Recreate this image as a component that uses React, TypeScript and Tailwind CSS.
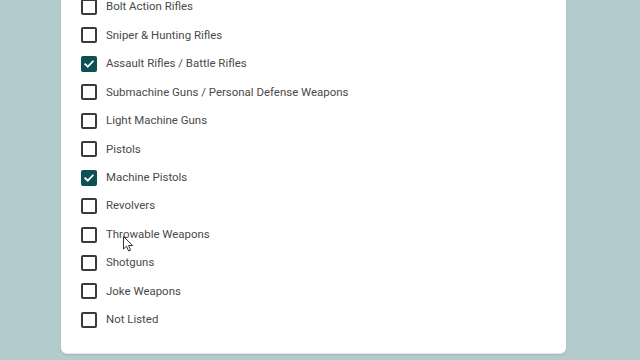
import React from "react";

const items: { label: string; checked: boolean }[] = [
  { label: "Bolt Action Rifles", checked: false },
  { label: "Sniper & Hunting Rifles", checked: false },
  { label: "Assault Rifles / Battle Rifles", checked: true },
  { label: "Submachine Guns / Personal Defense Weapons", checked: false },
  { label: "Light Machine Guns", checked: false },
  { label: "Pistols", checked: false },
  { label: "Machine Pistols", checked: true },
  { label: "Revolvers", checked: false },
  { label: "Throwable Weapons", checked: false },
  { label: "Shotguns", checked: false },
  { label: "Joke Weapons", checked: false },
  { label: "Not Listed", checked: false },
];

function Box({ checked }: { checked: boolean }) {
  if (checked) {
    return (
      <div className="w-4 h-4 rounded-[2px] bg-[#0e4f55] flex items-center justify-center">
        <svg width="12" height="12" viewBox="0 0 12 12">
          <path d="M2.2 6.2 L4.8 8.7 L9.8 3.4" fill="none" stroke="white" strokeWidth="1.8" strokeLinecap="square" />
        </svg>
      </div>
    );
  }
  return <div className="w-4 h-4 rounded-[2px] border-2 border-[#3a3a3a] bg-white" />;
}

export default function App() {
  return (
    <div className="w-[640px] h-[360px] overflow-hidden bg-[#b4cbcd] relative" style={{ fontFamily: "Roboto, 'Liberation Sans', sans-serif" }}>
      <div className="ml-[61px] w-[505px] mt-[-20px] bg-white rounded-b-[6px] border-b border-[#dfe8e8] shadow-[0_1px_2px_rgba(0,0,0,0.12)] pt-[12.8px] pb-[19px]">
        <div className="flex flex-col pl-[20px]">
          {items.map((it) => (
            <div key={it.label} className="h-[28.45px] flex items-center gap-[9px]">
              <Box checked={it.checked} />
              <span className="text-[11.45px] text-[#4a4a4a]">{it.label}</span>
            </div>
          ))}
        </div>
      </div>
      <svg className="absolute left-[123px] top-[236px]" width="12" height="17" viewBox="0 0 12 17">
        <path d="M0.5 0.5 L0.5 13 L3.5 10.2 L5.6 15 L7.6 14.1 L5.6 9.5 L9.6 9.5 Z" fill="white" stroke="#333" strokeWidth="1" strokeLinejoin="round" />
      </svg>
    </div>
  );
}
